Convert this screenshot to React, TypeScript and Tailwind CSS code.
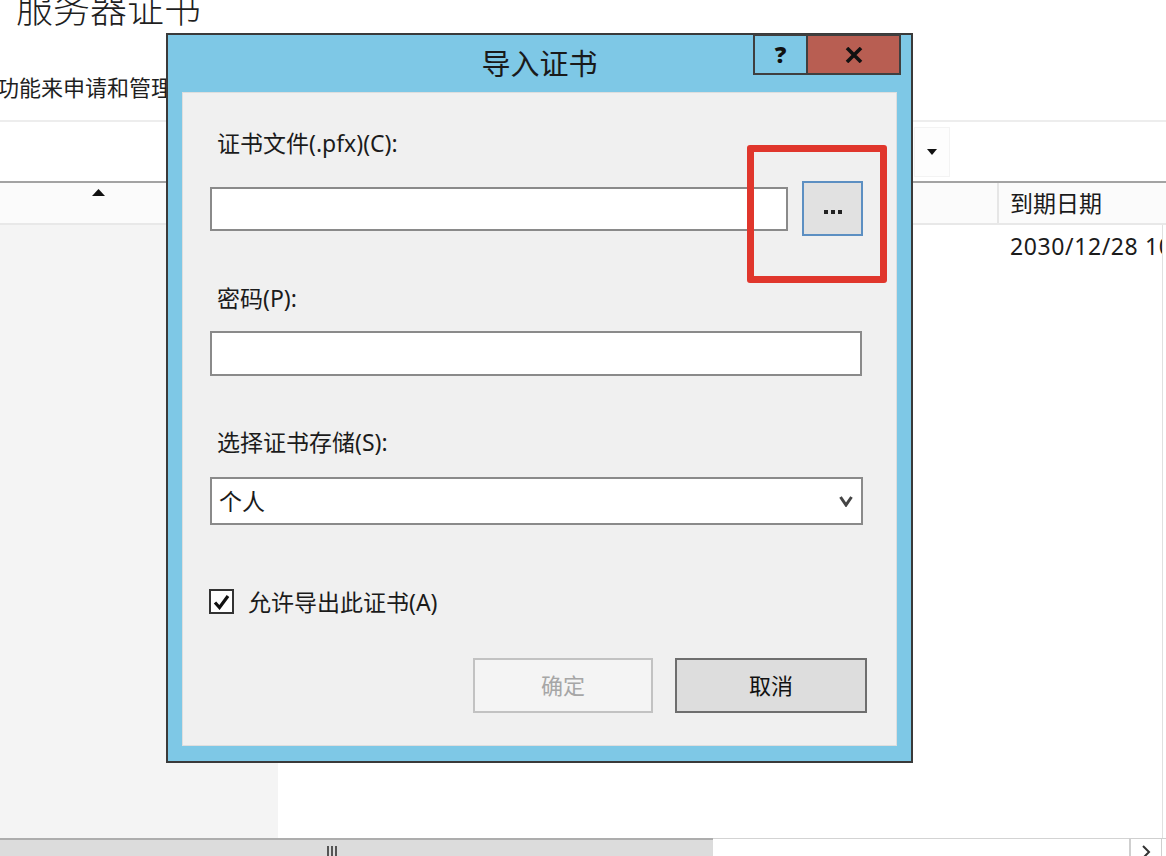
import React from "react";

function BackgroundPage() {
  return (
    <div className="flex h-full flex-col">
      <h1 className="-mt-[9px] whitespace-nowrap pl-[16px] text-[37px] font-light leading-[36px] text-[#1f1f1f]">
        服务器证书
      </h1>
      <p className="-ml-[3px] mt-[49px] whitespace-nowrap text-[22px] leading-[22px] text-[#1f1f1f]">
        功能来申请和管理用于 Web 服务器的证书。
      </p>
      <div className="mt-[22px] flex h-[61px] justify-end border-t-2 border-[#ededed] pr-[216px] pt-[5px]">
        <div className="flex h-[50px] w-[36px] items-center justify-center border border-[#f3f3f3] bg-[#fdfdfd]">
          <svg width="10" height="6" viewBox="0 0 10 6">
            <path d="M0 0 H10 L5 6 Z" fill="#111" />
          </svg>
        </div>
      </div>
      <div className="h-[2px] bg-[#a3a3a3]" />
      <div className="flex h-[42px] border-b-2 border-[#e8e8e8] bg-[#fbfbfb]">
        <div className="w-[997px] pl-[92px] pt-[6px]">
          <svg width="13" height="7" viewBox="0 0 13 7">
            <path d="M0 7 L6.5 0 L13 7 Z" fill="#111" />
          </svg>
        </div>
        <div className="flex-1 border-l-2 border-[#e6e6e6] pl-[11px] pt-[6px] text-[23px] leading-[28px] text-[#1b1b1b]">
          到期日期
        </div>
      </div>
      <div className="flex flex-1">
        <div className="w-[278px] bg-[#f4f4f4]" />
        <div className="w-[721px]" />
        <div className="flex-1 overflow-hidden whitespace-nowrap pl-[11px] pt-[7px] text-[23px] leading-[28px] tracking-[0.6px] text-[#1b1b1b]">
          2030/12/28 10:00:00
        </div>
        <div className="w-[4px] border-l border-[#e0e0e0]" />
      </div>
      <div className="flex h-[18px]">
        <div className="flex w-[713px] justify-center border-t-2 border-[#adadad] bg-[#dcdcdc] pt-[6px]">
          <div className="mr-[50px] flex gap-[2px]">
            <div className="h-[12px] w-[2px] bg-[#555]" />
            <div className="h-[12px] w-[2px] bg-[#555]" />
            <div className="h-[12px] w-[2px] bg-[#555]" />
          </div>
        </div>
        <div className="flex-1 border-t border-[#d3d3d3] bg-white" />
        <div className="flex w-[32px] justify-center border-l-2 border-t border-[#cfcfcf] pt-[6px]">
          <svg width="10" height="12" viewBox="0 0 10 12">
            <path d="M2 1 L8 7 L2 13" fill="none" stroke="#333" strokeWidth="2" />
          </svg>
        </div>
        <div className="w-[5px] border-l border-t border-[#cfcfcf]" />
      </div>
    </div>
  );
}

function Label({ children }: { children: React.ReactNode }) {
  return (
    <div className="ml-[7px] whitespace-nowrap text-[23px] leading-[28px] text-[#1b1b1b]">
      {children}
    </div>
  );
}

function ImportDialog() {
  return (
    <div className="absolute left-[166px] top-[33px] flex h-[730px] w-[747px] flex-col border-2 border-[#3a3a3a] bg-[#7ec8e6] px-[14px] pb-[15px]">
      <div className="flex h-[57px] items-center justify-center text-[29px] leading-[34px] text-[#1a1a1a]">
        导入证书
      </div>
      <div className="absolute left-[585px] top-[-1px] flex h-[41px] border-2 border-[#3f3f3f]">
        <div className="flex w-[53px] items-center justify-center border-r-2 border-[#3f3f3f] text-[23px] font-black text-[#111]">
          ?
        </div>
        <div className="flex w-[91px] items-center justify-center bg-[#b85e52]">
          <svg width="18" height="16" viewBox="0 0 18 16">
            <path d="M2 1 L16 15 M16 1 L2 15" stroke="#111" strokeWidth="3.6" />
          </svg>
        </div>
      </div>

      <div className="flex flex-1 flex-col border border-[#dedede] bg-[#f0f0f0] pl-[27px]">
        <div className="mt-[36px]">
          <Label>证书文件(.pfx)(C):</Label>
        </div>
        <div className="mt-[24px] flex h-[55px] items-center gap-[14px]">
          <div className="h-[44px] w-[578px] border-2 border-[#8a8a8a] bg-white" />
          <div className="flex h-[55px] w-[61px] items-center justify-center gap-[3px] border-2 border-[#5c8fc2] bg-[#e1e1e1] pt-[6px]">
            <div className="h-[4px] w-[4px] bg-[#222]" />
            <div className="h-[4px] w-[4px] bg-[#222]" />
            <div className="h-[4px] w-[4px] bg-[#222]" />
          </div>
        </div>

        <div className="mt-[48px]">
          <Label>密码(P):</Label>
        </div>
        <div className="mt-[19px] h-[45px] w-[652px] border-2 border-[#8a8a8a] bg-white" />

        <div className="mt-[52px]">
          <Label>选择证书存储(S):</Label>
        </div>
        <div className="mt-[21px] flex h-[48px] w-[653px] items-center justify-between border-2 border-[#8a8a8a] bg-white pl-[7px] pr-[8px]">
          <span className="text-[23px] leading-[28px] text-[#1b1b1b]">个人</span>
          <svg width="14" height="12" viewBox="0 0 14 12">
            <path d="M1.5 2 L7 10 L12.5 2" fill="none" stroke="#444" strokeWidth="3" />
          </svg>
        </div>

        <div className="-ml-[1px] mt-[64px] flex h-[25px] items-center gap-[14px]">
          <div className="flex h-[25px] w-[25px] items-center justify-center border-2 border-[#333] bg-white">
            <svg width="17" height="16" viewBox="0 0 17 16">
              <path d="M2 8.5 L6.5 13.5 L15 2" fill="none" stroke="#111" strokeWidth="3.2" />
            </svg>
          </div>
          <span className="whitespace-nowrap text-[23px] leading-[28px] text-[#1b1b1b]">允许导出此证书(A)</span>
        </div>

        <div className="ml-[263px] mt-[44px] flex gap-[22px]">
          <div className="flex h-[55px] w-[180px] items-center justify-center border-2 border-[#c2c2c2] bg-[#f4f4f4] text-[22px] text-[#a6a6a6]">
            确定
          </div>
          <div className="flex h-[55px] w-[192px] items-center justify-center border-2 border-[#6e6e6e] bg-[#dddddd] text-[22px] text-[#111]">
            取消
          </div>
        </div>
      </div>
    </div>
  );
}

export default function App() {
  return (
    <div className="relative h-[856px] w-[1166px] overflow-hidden bg-white font-['Noto_Sans','Noto_Sans_CJK_SC',sans-serif]">
      <BackgroundPage />
      <ImportDialog />
      <div className="absolute left-[747px] top-[145px] h-[138px] w-[140px] rounded-[3px] border-[7px] border-[#e0362c]" />
    </div>
  );
}
